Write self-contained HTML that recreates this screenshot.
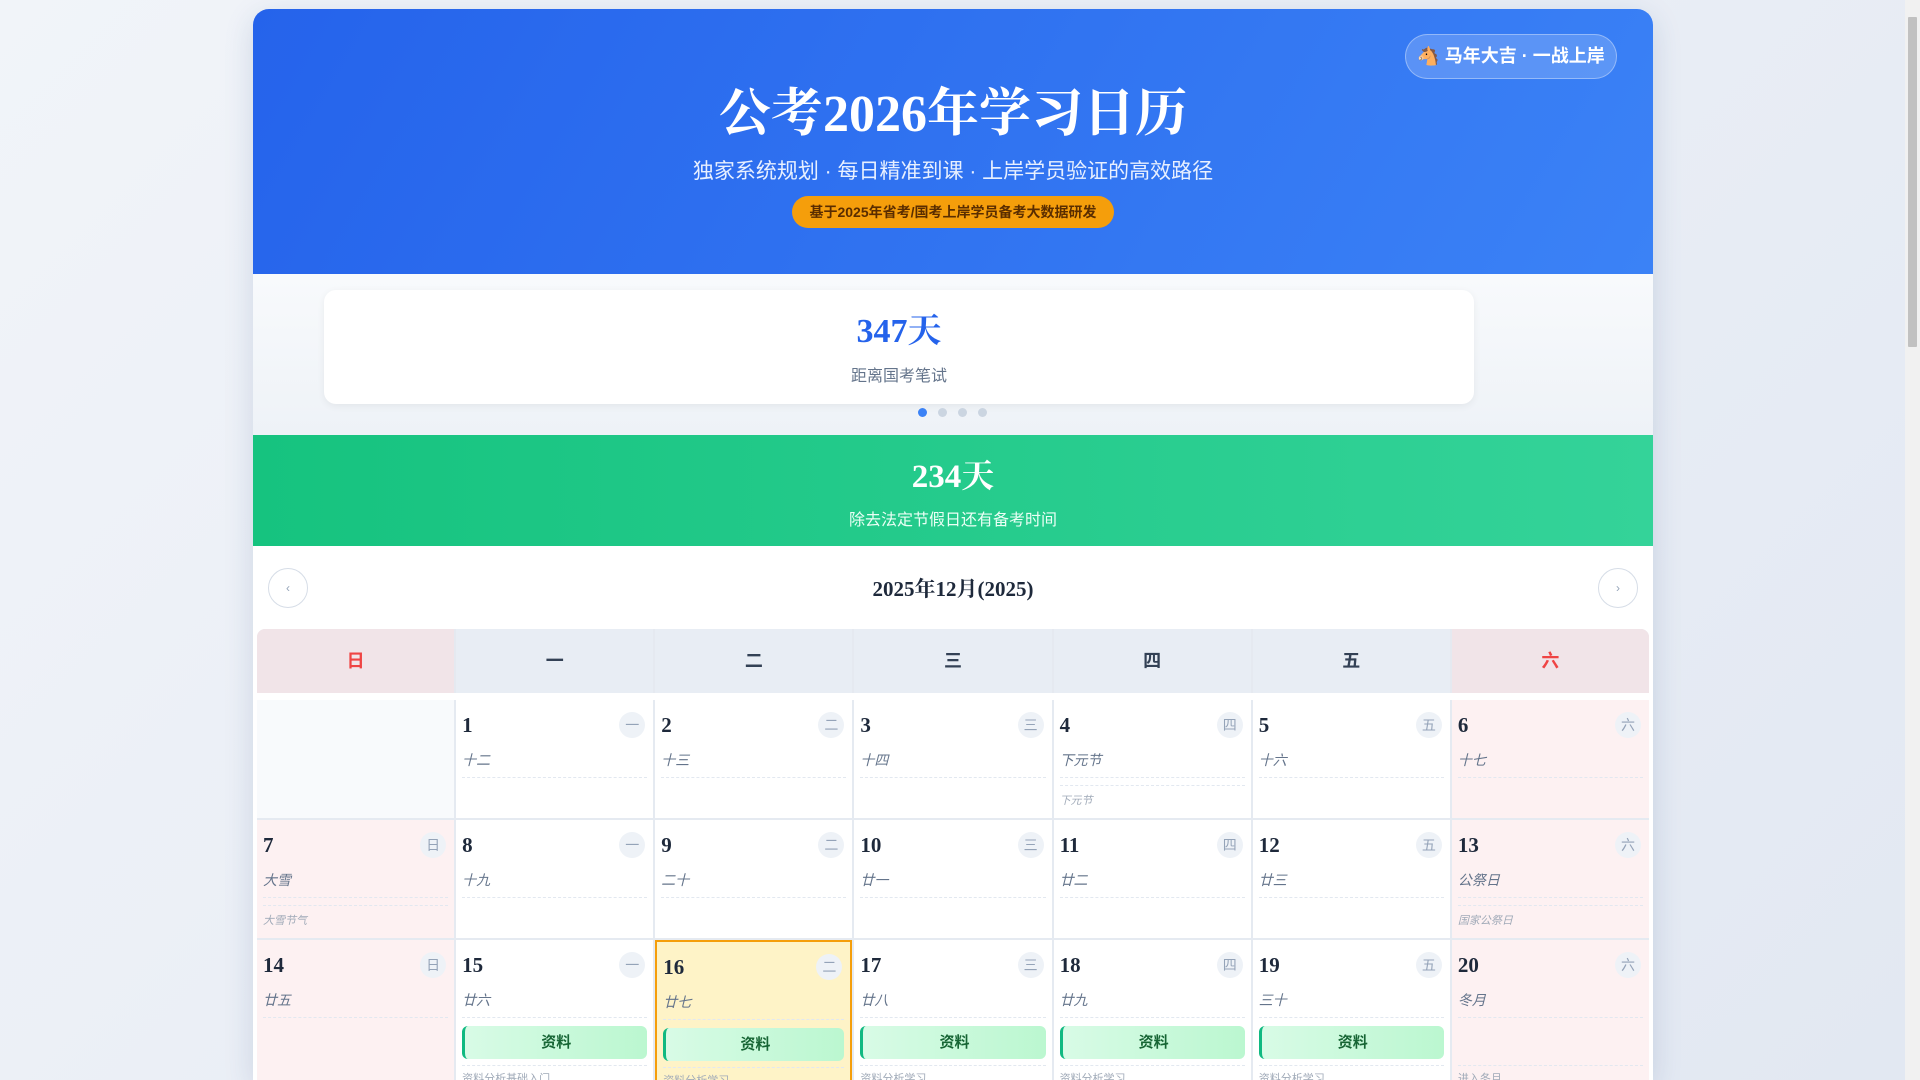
<!DOCTYPE html>
<html><head><meta charset="utf-8"><style>
*{box-sizing:border-box;margin:0;padding:0}
html,body{width:1920px;height:1080px;overflow:hidden}
body{background:linear-gradient(135deg,#f1f4f9,#e2e8f2);font-family:"Liberation Sans","Noto Sans CJK SC",sans-serif;position:relative}
.sb{position:absolute;right:0;top:0;width:15px;height:1080px;background:#f1f1f1}
.sb i{position:absolute;left:3px;top:17px;width:9px;height:330px;background:#c1c1c1;border-radius:1px}
.wrap{position:absolute;left:253px;top:9px;width:1400px;height:1071px;background:#fff;border-radius:16px 16px 0 0;overflow:hidden;box-shadow:0 8px 30px rgba(30,60,120,.15)}
.hd{position:absolute;left:0;top:0;width:1400px;height:265px;background:linear-gradient(120deg,#2563eb,#3b82f6)}
.badge{position:absolute;left:1152px;top:25px;width:212px;height:45px;border-radius:23px;background:rgba(255,255,255,.18);border:1px solid rgba(255,255,255,.35);color:#fff;font-weight:bold;font-size:18px;line-height:43px;text-align:center}
.title{position:absolute;left:0;width:1400px;top:62px;text-align:center;color:#fff;font:bold 52px "Liberation Serif","Noto Serif CJK SC",serif}
.sub{position:absolute;left:0;width:1400px;top:146px;text-align:center;color:#e8f0ff;font-size:21px}
.pill{position:absolute;left:539px;top:187px;width:322px;height:32px;border-radius:16px;background:#f59e0b;color:#5a2d00;font-weight:bold;font-size:14px;line-height:32px;text-align:center}
.cd{position:absolute;left:0;top:265px;width:1400px;height:161px;background:linear-gradient(#f8fafc,#eef2f7)}
.card{position:absolute;left:71px;top:16px;width:1150px;height:114px;background:#fff;border-radius:12px;box-shadow:0 2px 8px rgba(0,0,0,.06)}
.card b{position:absolute;top:13px;width:100%;text-align:center;color:#2563eb;font:bold 34px "Liberation Serif","Noto Serif CJK SC",serif}
.card span{position:absolute;top:72px;width:100%;text-align:center;color:#64748b;font-size:16px}
.dots{position:absolute;top:134px;left:665px}
.dots i{position:absolute;width:9px;height:9px;border-radius:50%;background:#cbd5e1;top:0}
.gr{position:absolute;left:0;top:426px;width:1400px;height:111px;background:linear-gradient(90deg,#16c37f,#34d399)}
.gr b{position:absolute;top:15px;width:100%;text-align:center;color:#fff;font:bold 33px "Liberation Serif","Noto Serif CJK SC",serif}
.gr span{position:absolute;top:71px;width:100%;text-align:center;color:#eafff5;font-size:16px}
.nav{position:absolute;left:0;top:537px;width:1400px;height:83px}
.nb{position:absolute;top:22px;width:40px;height:40px;border-radius:50%;border:1px solid #d6dde7;background:#fff;color:#94a3b8;font-size:12px;text-align:center;line-height:38px}
.nav h2{position:absolute;top:27px;width:100%;text-align:center;font:bold 21px "Liberation Serif","Noto Serif CJK SC",serif;color:#1e293b}
.wk{position:absolute;left:4px;top:620px;width:1392px;height:64px;display:grid;grid-template-columns:repeat(7,1fr);gap:2px;background:#e5e9f0;border-radius:8px 8px 0 0;overflow:hidden}
.wk div{background:#e8edf4;text-align:center;line-height:64px;font-size:18px;color:#334155;font-weight:bold}
.wk div.r{background:#f1e4e8;color:#ef4444}
.cal{position:absolute;left:4px;top:691px;width:1392px;height:380px;overflow:hidden;display:grid;grid-template-columns:repeat(7,1fr);grid-template-rows:118px 118px 200px;gap:2px;background:#e5eaf1}
.c{background:#fff;position:relative;padding:0 6px}
.c.w{background:#fdf1f2}.c.e{background:#f8fafc}
.c.t{background:#fef3c7;border:2px solid #f59e0b}
.n{position:absolute;left:6px;top:13px;font:bold 21px "Liberation Serif",serif;color:#1e293b}
.k{position:absolute;right:8px;top:12px;width:26px;height:26px;border-radius:13px;background:#eef2f7;color:#94a3b8;font-size:14px;text-align:center;line-height:26px}
.l{position:absolute;left:6px;right:6px;top:50px;height:28px;border-bottom:1px dashed #e2e8f0;font-style:italic;color:#64748b;font-size:14px}
.s{position:absolute;left:6px;right:6px;top:85px;border-top:1px dashed #e2e8f0;padding-top:6px;font-size:11px;color:#a0aab8;font-style:italic}
.m{position:absolute;left:6px;right:6px;top:86px;height:33px;border-radius:6px;border-left:3px solid #10b981;background:linear-gradient(90deg,#d8fbe6,#bbf7d0);text-align:center;line-height:33px;color:#166534;font-weight:bold;font-size:15px}
.ms{position:absolute;left:6px;right:6px;top:125px;border-top:1px dashed #e2e8f0;padding-top:4px;font-size:11px;color:#a0aab8}
</style></head><body>
<div class="wrap">
 <div class="hd">
  <div class="badge">🐴 马年大吉 · 一战上岸</div>
  <div class="title">公考2026年学习日历</div>
  <div class="sub">独家系统规划 · 每日精准到课 · 上岸学员验证的高效路径</div>
  <div class="pill">基于2025年省考/国考上岸学员备考大数据研发</div>
 </div>
 <div class="cd">
  <div class="card"><b>347天</b><span>距离国考笔试</span></div>
  <div class="dots"><i style="left:0;background:#3b82f6"></i><i style="left:20px"></i><i style="left:40px"></i><i style="left:60px"></i></div>
 </div>
 <div class="gr"><b>234天</b><span>除去法定节假日还有备考时间</span></div>
 <div class="nav"><div class="nb" style="left:15px">‹</div><h2>2025年12月(2025)</h2><div class="nb" style="left:1345px">›</div></div>
 <div class="wk"><div class="r">日</div><div>一</div><div>二</div><div>三</div><div>四</div><div>五</div><div class="r">六</div></div>
 <div class="cal">
  <div class="c e"></div>
  <div class="c"><span class="n">1</span><span class="k">一</span><div class="l">十二</div></div>
  <div class="c"><span class="n">2</span><span class="k">二</span><div class="l">十三</div></div>
  <div class="c"><span class="n">3</span><span class="k">三</span><div class="l">十四</div></div>
  <div class="c"><span class="n">4</span><span class="k">四</span><div class="l">下元节</div><div class="s">下元节</div></div>
  <div class="c"><span class="n">5</span><span class="k">五</span><div class="l">十六</div></div>
  <div class="c w"><span class="n">6</span><span class="k">六</span><div class="l">十七</div></div>
  <div class="c w"><span class="n">7</span><span class="k">日</span><div class="l">大雪</div><div class="s">大雪节气</div></div>
  <div class="c"><span class="n">8</span><span class="k">一</span><div class="l">十九</div></div>
  <div class="c"><span class="n">9</span><span class="k">二</span><div class="l">二十</div></div>
  <div class="c"><span class="n">10</span><span class="k">三</span><div class="l">廿一</div></div>
  <div class="c"><span class="n">11</span><span class="k">四</span><div class="l">廿二</div></div>
  <div class="c"><span class="n">12</span><span class="k">五</span><div class="l">廿三</div></div>
  <div class="c w"><span class="n">13</span><span class="k">六</span><div class="l">公祭日</div><div class="s">国家公祭日</div></div>
  <div class="c w"><span class="n">14</span><span class="k">日</span><div class="l">廿五</div></div>
  <div class="c"><span class="n">15</span><span class="k">一</span><div class="l">廿六</div><div class="m">资料</div><div class="ms">资料分析基础入门</div></div>
  <div class="c t"><span class="n">16</span><span class="k">二</span><div class="l">廿七</div><div class="m">资料</div><div class="ms">资料分析学习</div></div>
  <div class="c"><span class="n">17</span><span class="k">三</span><div class="l">廿八</div><div class="m">资料</div><div class="ms">资料分析学习</div></div>
  <div class="c"><span class="n">18</span><span class="k">四</span><div class="l">廿九</div><div class="m">资料</div><div class="ms">资料分析学习</div></div>
  <div class="c"><span class="n">19</span><span class="k">五</span><div class="l">三十</div><div class="m">资料</div><div class="ms">资料分析学习</div></div>
  <div class="c w"><span class="n">20</span><span class="k">六</span><div class="l">冬月</div><div class="ms">进入冬月</div></div>
 </div>
</div>
<div class="sb"><i></i></div>
</body></html>
